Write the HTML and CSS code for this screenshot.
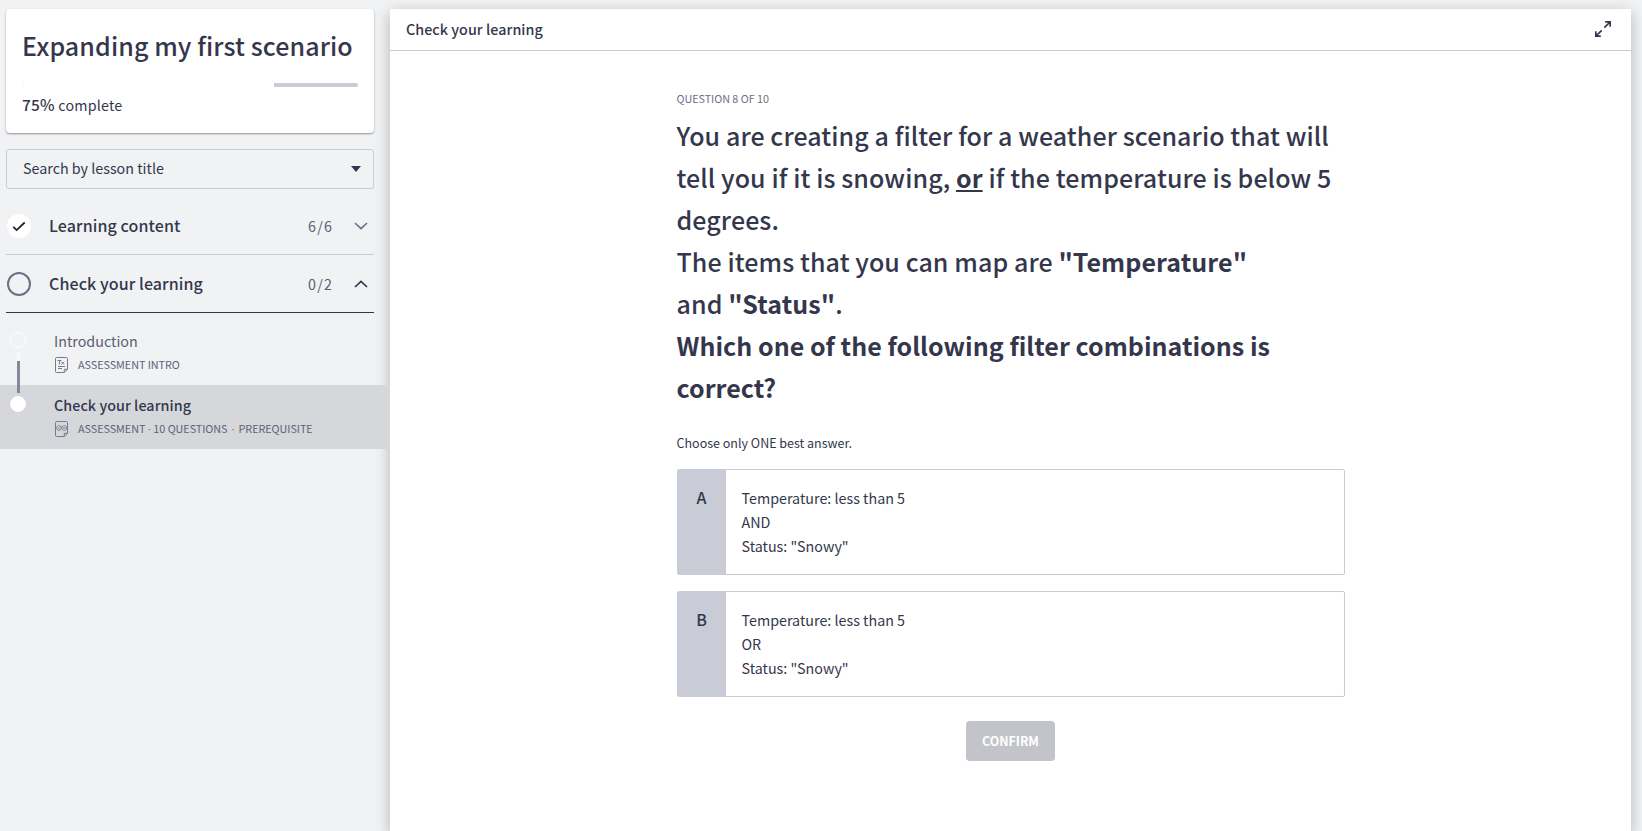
FILE: index.html
```
<!DOCTYPE html>
<html lang="en">
<head>
<meta charset="utf-8">
<title>Check your learning</title>
<link rel="stylesheet" href="styles.css">
</head>
<body>
<div class="app">
  <aside class="sidebar">
    <section class="course-card">
      <h1 class="course-title">Expanding my first scenario</h1>
      <div class="progress"><div class="progress-done" style="width:75%"></div></div>
      <p class="progress-label"><b>75%</b> complete</p>
    </section>
    <div class="search"><span class="search-text">Search by lesson title</span>
      <svg class="caret" width="10" height="6" viewBox="0 0 10 6"><path d="M0 0h10L5 6z" fill="#34374c"/></svg>
    </div>
    <div class="section">
      <svg class="status" width="24" height="24" viewBox="0 0 24 24"><circle cx="12" cy="12" r="12" fill="#fff"/><path d="M6.3 12.8l3.3 3.3 8.1-7.6" fill="none" stroke="#20222e" stroke-width="1.8"/></svg>
      <span class="section-title">Learning content</span>
      <span class="count">6/6</span>
      <svg class="chevron" width="14" height="8" viewBox="0 0 14 8"><path d="M1 1l6 5.6L13 1" fill="none" stroke="#6d7086" stroke-width="1.7"/></svg>
    </div>
    <div class="section section-open">
      <svg class="status" width="24" height="24" viewBox="0 0 24 24"><circle cx="12" cy="12" r="11" fill="none" stroke="#6d7086" stroke-width="2"/></svg>
      <span class="section-title">Check your learning</span>
      <span class="count">0/2</span>
      <svg class="chevron" width="14" height="8" viewBox="0 0 14 8"><path d="M1 7l6-5.6L13 7" fill="none" stroke="#34374c" stroke-width="1.7"/></svg>
    </div>
    <div class="lessons">
      <div class="lesson">
        <div class="rail"><span class="dot"></span></div>
        <div class="lesson-body">
          <div class="lesson-title">Introduction</div>
          <div class="meta">
            <svg class="doc" width="13" height="16" viewBox="0 0 13 16" fill="none" stroke="#777a8f" stroke-width="1"><path d="M1.5.5h10a1 1 0 0 1 1 1v10.8l-3.2 3.2H1.5a1 1 0 0 1-1-1v-13a1 1 0 0 1 1-1z"/><path d="M9.3 15.3v-3h3"/><path d="M2.5 3.5h4M4.5 3.5v4M6.3 4.8l2.7 2.7M9 4.8L6.3 7.5"/><path d="M3 9.5h7M3 11.5h4"/></svg>
            <span class="meta-text intro">ASSESSMENT INTRO</span>
          </div>
        </div>
      </div>
      <div class="lesson active">
        <div class="rail"><span class="dot dot-full"></span></div>
        <div class="lesson-body">
          <div class="lesson-title">Check your learning</div>
          <div class="meta">
            <svg class="doc" width="13" height="16" viewBox="0 0 13 16" fill="none" stroke="#777a8f" stroke-width="1"><path d="M1.5.5h10a1 1 0 0 1 1 1v10.8l-3.2 3.2H1.5a1 1 0 0 1-1-1v-13a1 1 0 0 1 1-1z"/><path d="M9.3 15.3v-3h3"/><g stroke-width=".8"><circle cx="4" cy="7" r="2.4"/><circle cx="9.3" cy="7" r="2.4"/><path d="M2.8 6.8l1.1 1.1 2.4-3M8.4 6.1l1.8 1.8M10.2 6.1L8.4 7.9"/></g></svg>
            <span class="meta-text full">ASSESSMENT<span class="sep">·</span>10 QUESTIONS<span class="sep wide">·</span>PREREQUISITE</span>
          </div>
        </div>
      </div>
      <span class="connector"></span>
    </div>
  </aside>
  <main class="player">
    <header class="player-head">
      <span class="player-title">Check your learning</span>
      <svg class="expand" width="16" height="16" viewBox="0 0 16 16" fill="none" stroke="#34374c" stroke-width="1.7"><path d="M9.3 6.7L15 1M10.2.8h5v5M6.7 9.3L1 15M.8 10.2v5h5"/></svg>
    </header>
    <div class="question">
      <div class="step">QUESTION 8 OF 10</div>
      <div class="prompt">
        <div class="line">You are creating a filter for a weather scenario that will</div>
        <div class="line">tell you if it is snowing, <b class="u">or</b> if the temperature is below 5</div>
        <div class="line">degrees.</div>
        <div class="line">The items that you can map are <b>"Temperature"</b></div>
        <div class="line">and <b>"Status"</b>.</div>
        <div class="line strong">Which one of the following filter combinations is</div>
        <div class="line strong">correct?</div>
      </div>
      <div class="hint">Choose only ONE best answer.</div>
      <div class="answer"><div class="letter">A</div><div class="answer-text">Temperature: less than 5<br>AND<br>Status: "Snowy"</div></div>
      <div class="answer"><div class="letter">B</div><div class="answer-text">Temperature: less than 5<br>OR<br>Status: "Snowy"</div></div>
      <button class="confirm">CONFIRM</button>
    </div>
  </main>
</div>
</body>
</html>
```
FILE: styles.css
```
* { box-sizing: border-box; }
body { margin: 0; background: #f1f2f4; color: #34374c; font-family: "Noto Sans CJK SC", "Noto Sans", sans-serif; white-space: nowrap; }
.app { display: flex; height: 831px; overflow: hidden; padding: 9px 11px 0 0; }
.sidebar { width: 390px; flex: none; display: flex; flex-direction: column; }
.course-card { width: 368px; height: 124px; margin-left: 6px; padding: 15px 16px 0; background: #fff; border-radius: 4px; box-shadow: 0 1px 2px rgba(0,0,0,.4); }
.course-title { margin: 0; font-size: 25px; letter-spacing: .1px; font-weight: 500; line-height: 42px; }
.progress { height: 4px; margin-top: 17px; background: #c9cbd6; border-radius: 2px; overflow: hidden; }
.progress-done { height: 4px; background: #fff; }
.progress-label { margin: 5px 0 0; font-size: 14.3px; letter-spacing: .2px; line-height: 24px; }
.progress-label b { font-size: 15.5px; font-weight: 500; }
.search { width: 368px; height: 40px; margin: 16px 0 0 6px; padding: 0 12px 0 16px; border: 1px solid #c9cbd6; border-radius: 3px; display: flex; align-items: center; justify-content: space-between; font-size: 14.3px; line-height: 24px; }
.search-text { padding-bottom: 2px; }
.section { width: 368px; height: 58px; margin-left: 6px; padding: 0 6px 0 1px; border-bottom: 1px solid #c9cbd6; display: flex; align-items: center; }
.search + .section { height: 66px; padding-top: 9px; }
.section-open { border-color: #34374c; }
.section-title { margin-left: 18px; padding-bottom: 2px; flex: 1; font-size: 16px; letter-spacing: .1px; font-weight: 500; line-height: 24px; }
.count { width: 25px; font-size: 14.3px; letter-spacing: 1.2px; color: #5a5d73; line-height: 24px; }
.chevron { margin-left: 21px; }
.lessons { position: relative; padding-top: 8px; }
.lesson { height: 64px; display: flex; }
.active { background: #d6d7db; }
.rail { width: 54px; padding: 11px 0 0 10px; }
.dot { display: block; width: 16px; height: 16px; border: 1.5px solid #fff; border-radius: 50%; }
.dot-full { background: #fff; }
.connector { position: absolute; left: 17px; top: 40px; width: 3px; height: 40px; background: linear-gradient(#fafafa 8px, #85879a 8px); }
.lesson-body { padding-top: 8px; }
.lesson-title { font-size: 14.3px; line-height: 24px; color: #5a5d73; }
.active .lesson-title { color: #34374c; font-weight: 500; letter-spacing: .06px; }
.meta { display: flex; align-items: center; height: 22px; padding-left: 1px; }
.doc { margin-top: 2px; }
.meta-text { margin-left: 10px; font-size: 10.8px; letter-spacing: -.04px; color: #5f6277; }
.sep { display: inline-block; width: 8px; text-align: center; font-family: "Liberation Sans", sans-serif; }
.wide { width: 11px; }
.player { flex: 1; background: #fff; box-shadow: 0 4px 14px rgba(0,0,0,.26); }
.player-head { height: 42px; padding: 0 20px 0 16px; border-bottom: 1px solid #c9cbd6; display: flex; align-items: center; justify-content: space-between; }
.player-title { padding-bottom: 2px; font-size: 14.3px; letter-spacing: .05px; font-weight: 500; }
.expand { margin-bottom: 2px; }
.question { width: 668px; margin: 0 auto; padding-top: 36px; display: flex; flex-direction: column; }
.step { font-size: 10.8px; letter-spacing: -.04px; line-height: 22px; color: #6d7086; }
.prompt { margin-top: 5px; font-size: 25px; letter-spacing: .09px; font-weight: 500; line-height: 42px; }
.prompt b { font-weight: 700; }
.strong { font-weight: 700; letter-spacing: .03px; }
.u { text-decoration: underline; }
.hint { margin-top: 24px; height: 37px; font-size: 12.5px; line-height: 22px; }
.answer { height: 106px; margin-bottom: 16px; border: 1px solid #c9cbd6; border-radius: 2px; display: flex; }
.letter { width: 48px; padding-top: 15px; background: #c9cbd6; text-align: center; font-size: 16px; font-weight: 500; line-height: 24px; }
.answer-text { padding: 16px; font-size: 14.3px; line-height: 24px; }
.confirm { align-self: center; width: 89px; height: 40px; margin-top: 8px; padding: 0; border: 0; border-radius: 4px; background: #c3c4ca; color: #fff; font: 700 12.4px/40px "Noto Sans CJK SC", sans-serif; }
```
